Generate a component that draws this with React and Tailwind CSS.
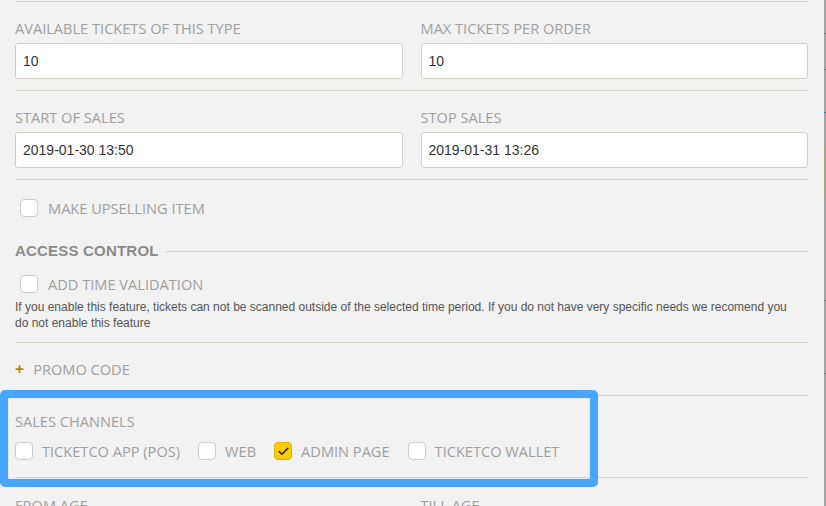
import { Check } from 'lucide-react'

const label = "text-[14.6px] leading-5 uppercase text-[#a0a0a0]"

function Field({ title, value }) {
  return (
    <div>
      <div className={label}>{title}</div>
      <div className="mt-[5px] h-[36px] bg-white border border-[#cfcfc4] rounded-[3px] px-[7px] flex items-center text-[14px] text-[#333] font-['Liberation_Sans',Arial,sans-serif]">
        {value}
      </div>
    </div>
  )
}

function Box({ checked }) {
  return (
    <span
      className={`w-[18px] h-[18px] rounded-[4px] border flex items-center justify-center shrink-0 ${checked
        ? 'bg-[#ffcc00] border-[#d9b300]'
        : 'bg-white border-[#cccccc]'
        }`}
    >
      {checked && <Check size={13} strokeWidth={3} className="text-[#222]" />}
    </span>
  )
}

function CheckRow({ text, checked, className = '' }) {
  return (
    <label className={`flex items-center gap-[9px] ${className}`}>
      <Box checked={checked} />
      <span className="text-[14.6px] leading-5 uppercase text-[#a0a0a0]">{text}</span>
    </label>
  )
}

function Divider() {
  return <div className="h-px bg-[#d4d4ca]" />
}

function App() {
  const channels = [
    { name: 'Ticketco app (POS)', checked: false },
    { name: 'Web', checked: false },
    { name: 'Admin page', checked: true },
    { name: 'Ticketco wallet', checked: false },
  ]

  return (
    <div className="w-[826px] h-[506px] overflow-hidden bg-[#f2f2f2] flex font-['Open_Sans',sans-serif]">
      <div className="flex-1 pl-[15px] pr-[16px] relative">
        <div className="h-px bg-[#d4d4ca] mt-[1px]" />

        <div className="grid grid-cols-2 gap-x-[18px] pt-[16px] pb-[11px]">
          <Field title="Available tickets of this type" value="10" />
          <Field title="Max tickets per order" value="10" />
        </div>
        <Divider />

        <div className="grid grid-cols-2 gap-x-[18px] pt-[16px] pb-[11px]">
          <Field title="Start of sales" value="2019-01-30 13:50" />
          <Field title="Stop sales" value="2019-01-31 13:26" />
        </div>
        <Divider />

        <CheckRow text="Make upselling item" className="pl-[5px] mt-[18px] gap-[10px]" />

        {/* access control */}
        <div className="flex items-center gap-[7px] mt-[23px]">
          <span className="text-[15px] leading-5 font-bold uppercase text-[#8a8a8a] tracking-[0.2px] font-['Liberation_Sans',Arial,sans-serif]">Access control</span>
          <div className="flex-1 h-px bg-[#d4d4ca]" />
        </div>
        <CheckRow text="Add time validation" className="pl-[5px] mt-[13px] gap-[10px]" />
        <p className="mt-[5px] pr-[12px] text-[12px] leading-4 text-[#555] font-['Liberation_Sans',Arial,sans-serif]">
          If you enable this feature, tickets can not be scanned outside of the selected time period. If you do not have very specific needs we recomend you do not enable this feature
        </p>
        <div className="h-px bg-[#d4d4ca] mt-[11px]" />

        <div className="flex items-center gap-[9px] h-[52px]">
          <span className="text-[#b8860b] text-[16px] font-bold leading-5">+</span>
          <span className="text-[14.6px] leading-5 uppercase text-[#a0a0a0]">Promo code</span>
        </div>
        <Divider />

        <div className="mt-[15px]">
          <div className={label}>Sales channels</div>
          <div className="flex items-center mt-[10px]">
            {channels.map((c, i) => (
              <CheckRow key={i} text={c.name} checked={c.checked} className="mr-[18px]" />
            ))}
          </div>
        </div>
        <div className="h-px bg-[#d4d4ca] mt-[16px]" />

        <div className="grid grid-cols-2 gap-x-[18px] pt-[17px]">
          <div className={label}>From age</div>
          <div className={label}>Till age</div>
        </div>

        {/* highlight annotation */}
        <div className="absolute left-0 top-[390px] w-[598px] h-[97px] border-[8px] border-[#46a6ff] rounded-[5px] shadow-[inset_0_0_1px_rgba(0,0,0,0.4)]" />
      </div>

      {/* page edge behind */}
      <div className="w-[2px] flex flex-col">
        <div className="h-[33px] bg-[#a3a3a3]" />
        <div className="h-px bg-[#7a7a7a]" />
        <div className="h-[35px] bg-[#a3a3a3]" />
        <div className="h-px bg-[#7a7a7a]" />
        <div className="h-[42px] bg-[#a3a3a3]" />
        <div className="h-px bg-[#2f7fc0]" />
        <div className="h-[32px] bg-[#a3a3a3]" />
        <div className="h-[51px] bg-[#aaa283]" />
        <div className="h-[104px] bg-[#a3a3a3]" />
        <div className="h-px bg-[#7a7a7a]" />
        <div className="h-[72px] bg-[#a3a3a3]" />
        <div className="h-px bg-[#7a7a7a]" />
        <div className="flex-1 bg-[#a3a3a3]" />
      </div>
    </div>
  )
}

export default App
